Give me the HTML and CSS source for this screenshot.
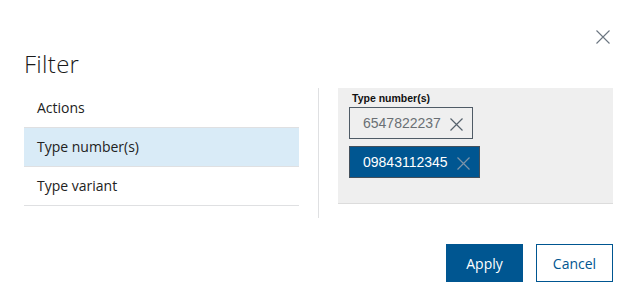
FILE: index.html
```html
<!DOCTYPE html>
<html lang="en">
<head>
<meta charset="utf-8">
<title>Filter</title>
<link rel="stylesheet" href="styles.css">
</head>
<body>
<div class="dialog">
  <div class="top">
    <button class="close" aria-label="Close">
      <svg width="14" height="14" viewBox="0 0 14 14"><path d="M0.5 0.5 L13.5 13.5 M13.5 0.5 L0.5 13.5" stroke="#6b7580" stroke-width="1.1" fill="none"/></svg>
    </button>
  </div>
  <h1 class="title">Filter</h1>
  <div class="body">
    <ul class="list">
      <li class="item">Actions</li>
      <li class="item active">Type number(s)</li>
      <li class="item">Type variant</li>
    </ul>
    <div class="divider"></div>
    <div class="panel">
      <div class="label">Type number(s)</div>
      <div class="chips">
        <div class="chip">
          <span>6547822237</span>
          <svg width="13" height="13" viewBox="0 0 13 13"><path d="M0.5 0.5 L12.5 12.5 M12.5 0.5 L0.5 12.5" stroke="#56626d" stroke-width="1.2" fill="none"/></svg>
        </div>
        <div class="chip selected">
          <span>09843112345</span>
          <svg width="13" height="13" viewBox="0 0 13 13"><path d="M0.5 0.5 L12.5 12.5 M12.5 0.5 L0.5 12.5" stroke="#7d93a8" stroke-width="1.2" fill="none"/></svg>
        </div>
      </div>
    </div>
  </div>
  <div class="footer">
    <button class="btn primary">Apply</button>
    <button class="btn secondary">Cancel</button>
  </div>
</div>
</body>
</html>
```
FILE: styles.css
```css
* { box-sizing: border-box; }
html, body { margin: 0; padding: 0; background: #fff; }
body { font-family: "Open Sans", "Noto Sans", sans-serif; color: #1f1f1f; }

.dialog {
  width: 634px;
  height: 305px;
  padding: 30px 21px 0 24px;
}
.top {
  display: flex;
  justify-content: flex-end;
  height: 14px;
}
.close {
  border: 0;
  background: none;
  padding: 0;
  width: 14px;
  height: 14px;
  margin-right: 3px;
  display: block;
}
.close svg { display: block; }

.title {
  margin: 2px 0 0 0;
  font-size: 24px;
  font-weight: 300;
  line-height: 36px;
  color: #1a1a1a;
  letter-spacing: 0.3px;
}

.body {
  display: flex;
  margin-top: 6px;
  width: 589px;
}
.list {
  list-style: none;
  margin: 0;
  padding: 1px 0 0 0;
  width: 275px;
}
.item {
  height: 39px;
  border-bottom: 1px solid #dfe0e2;
  padding-left: 13px;
  font-size: 14px;
  line-height: 38px;
  color: #222;
}
.item.active { background: #d9ebf7; }

.divider {
  width: 1px;
  height: 130px;
  background: #dfe0e2;
  margin: 0 19px 0 19px;
}

.panel {
  width: 275px;
  height: 116px;
  background: #efefef;
  border-bottom: 1px solid #dcdcdc;
  padding: 4px 0 0 11px;
}
.label {
  font-family: "Liberation Sans", Arial, sans-serif;
  font-size: 10.5px;
  font-weight: bold;
  color: #111;
  line-height: 13px;
  padding-left: 3px;
}
.chips {
  display: flex;
  flex-direction: column;
  align-items: flex-start;
  gap: 7px;
  margin-top: 2px;
}
.chip {
  display: flex;
  align-items: center;
  height: 32px;
  border: 1px solid #4f5b66;
  padding: 0 9px 0 13px;
  gap: 9px;
  font-family: "Liberation Sans", Arial, sans-serif;
  font-size: 14px;
  color: #6a6f74;
  background: #efefef;
}
.chip svg { display: block; margin-top: 3px; }
.chip.selected {
  background: #005691;
  border-color: #43505c;
  color: #fff;
}

.footer {
  display: flex;
  justify-content: flex-end;
  gap: 13px;
  width: 589px;
  margin-top: 26px;
}
.btn {
  width: 77px;
  height: 38px;
  font-family: "Open Sans", "Noto Sans", sans-serif;
  font-size: 14px;
  padding: 0;
  cursor: pointer;
}
.btn.primary {
  background: #005691;
  border: 1px solid #005691;
  color: #fff;
}
.btn.secondary {
  background: #fff;
  border: 1px solid #005691;
  color: #005691;
}
```
